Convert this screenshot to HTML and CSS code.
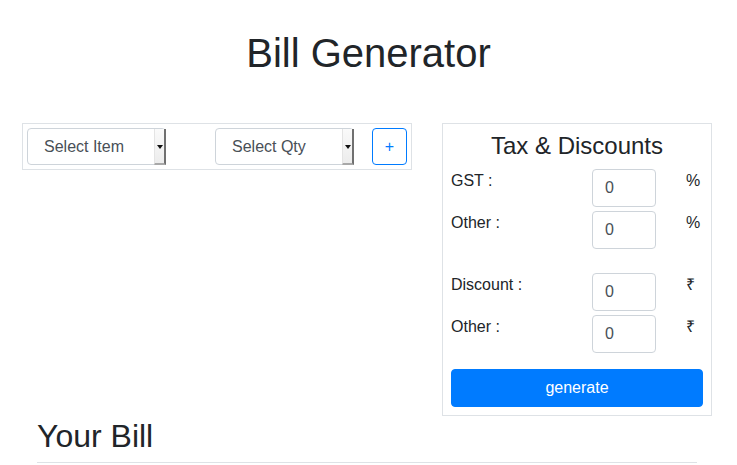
FILE: index.html
```html
<!DOCTYPE html>
<html lang="en">
<head>
<meta charset="utf-8">
<title>Bill Generator</title>
<link rel="stylesheet" href="styles.css">
</head>
<body>
<div class="page">
  <h1 class="title">Bill Generator</h1>
  <div class="main">
    <div class="items-panel">
      <div class="select-wrap">
        <select class="select"><option>Select Item</option></select>
        <span class="select-arrow"></span>
      </div>
      <div class="select-wrap second">
        <select class="select"><option>Select Qty</option></select>
        <span class="select-arrow"></span>
      </div>
      <button class="add-btn" type="button">+</button>
    </div>
    <div class="tax-panel">
      <h4 class="tax-title">Tax &amp; Discounts</h4>
      <div class="tax-row">
        <span class="tax-label">GST :</span>
        <input class="tax-input" type="text" value="0">
        <span class="tax-sign">%</span>
      </div>
      <div class="tax-row">
        <span class="tax-label">Other :</span>
        <input class="tax-input" type="text" value="0">
        <span class="tax-sign">%</span>
      </div>
      <div class="tax-row spaced">
        <span class="tax-label">Discount :</span>
        <input class="tax-input" type="text" value="0">
        <span class="tax-sign">₹</span>
      </div>
      <div class="tax-row">
        <span class="tax-label">Other :</span>
        <input class="tax-input" type="text" value="0">
        <span class="tax-sign">₹</span>
      </div>
      <button class="generate-btn" type="button">generate</button>
    </div>
  </div>
  <h2 class="bill-title">Your Bill</h2>
  <hr class="bill-rule">
</div>
</body>
</html>
```

FILE: styles.css
```css
* {
  box-sizing: border-box;
}

html, body {
  margin: 0;
  padding: 0;
  background: #fff;
}

body {
  font-family: "Liberation Sans", Arial, sans-serif;
  font-size: 16px;
  line-height: 1.5;
  color: #212529;
}

.page {
  padding: 29px 0 0 22px;
  width: 737px;
}

.title {
  margin: 0 0 46px -22px;
  font-size: 40px;
  font-weight: 500;
  line-height: 1.2;
  text-align: center;
}

.main {
  display: flex;
  align-items: flex-start;
  gap: 30px;
}

.items-panel {
  width: 390px;
  border: 1px solid #dee2e6;
  padding: 4px;
  display: flex;
  align-items: center;
}

.select-wrap {
  position: relative;
  width: 139px;
  height: 37px;
}

.select-wrap.second {
  margin-left: 49px;
}

.select {
  -webkit-appearance: none;
  appearance: none;
  width: 100%;
  height: 100%;
  margin: 0;
  border: 1px solid #ced4da;
  border-radius: 4px;
  background: #fff;
  padding: 0 0 0 16px;
  font-family: inherit;
  font-size: 16px;
  color: #495057;
}

.select-arrow {
  position: absolute;
  top: 1px;
  right: 0;
  bottom: 0;
  width: 12px;
  background: linear-gradient(#fafafa, #ececec);
  border-right: 2px solid #707070;
  border-bottom: 2px solid #a8a8a8;
  border-left: 1px solid #e4e4e4;
  pointer-events: none;
}

.select-arrow::after {
  content: "";
  position: absolute;
  left: 2px;
  top: 16px;
  border-left: 3px solid transparent;
  border-right: 3px solid transparent;
  border-top: 4px solid #111;
}

.add-btn {
  margin-left: 18px;
  width: 35px;
  height: 37px;
  padding: 0;
  border: 1px solid #007bff;
  border-radius: 4px;
  background: #fff;
  color: #007bff;
  font-family: inherit;
  font-size: 16px;
  line-height: 1;
}

.tax-panel {
  width: 270px;
  border: 1px solid #dee2e6;
  padding: 8px;
}

.tax-title {
  margin: 0 0 8px;
  font-size: 24px;
  font-weight: 500;
  line-height: 1.2;
  text-align: center;
}

.tax-row {
  display: grid;
  grid-template-columns: 141px 64px 1fr;
  align-items: start;
  margin-bottom: 4px;
}

.tax-row.spaced {
  margin-top: 24px;
}

.tax-label {
  line-height: 24px;
}

.tax-input {
  width: 64px;
  height: 38px;
  margin: 0;
  border: 1px solid #ced4da;
  border-radius: 4px;
  padding: 0 12px;
  font-family: inherit;
  font-size: 16px;
  color: #495057;
  background: #fff;
}

.tax-sign {
  padding-left: 30px;
  line-height: 24px;
}

.generate-btn {
  display: block;
  width: 100%;
  height: 38px;
  margin-top: 16px;
  border: 1px solid #007bff;
  border-radius: 4px;
  background: #007bff;
  color: #fff;
  font-family: inherit;
  font-size: 16px;
}

.bill-title {
  margin: 1px 0 0 15px;
  font-size: 32px;
  font-weight: 500;
  line-height: 1.2;
}

.bill-rule {
  margin: 7px 0 0 15px;
  width: 660px;
  border: 0;
  border-top: 1px solid #dee2e6;
  height: 0;
}
```
